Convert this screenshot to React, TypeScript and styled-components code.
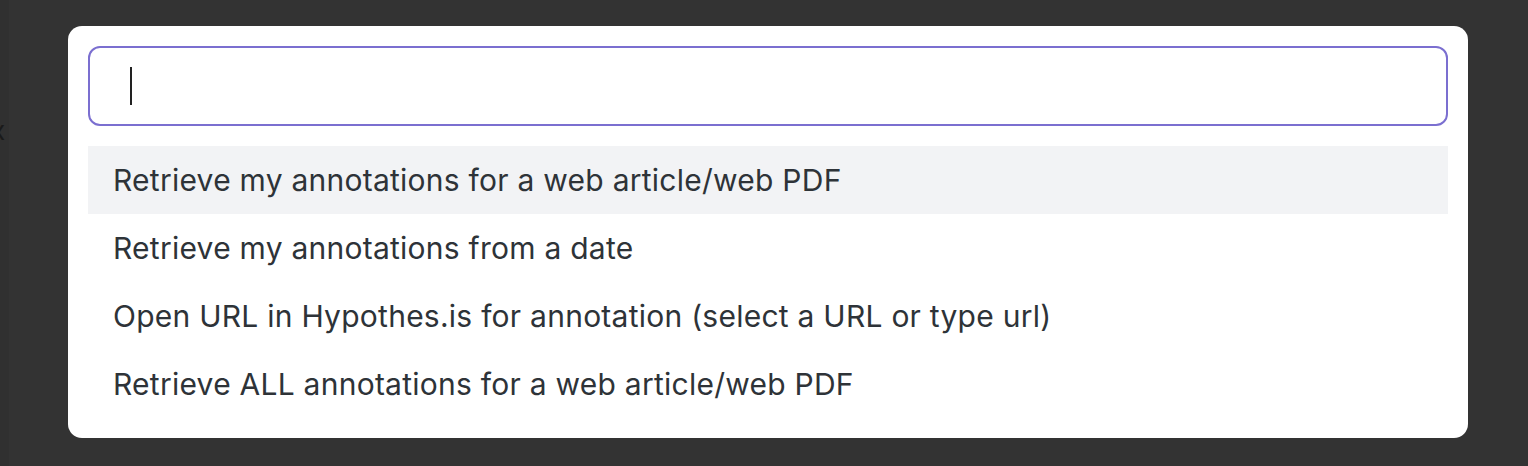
import React from "react";
import styled, { createGlobalStyle } from "styled-components";

const Global = createGlobalStyle`
  html, body { margin: 0; padding: 0; background: #333333; }
  body { font-family: Inter, "Noto Sans", sans-serif; }
`;

const Page = styled.div`
  position: relative;
  width: 1528px;
  height: 466px;
  background: #333333;
  display: flex;
  overflow: hidden;
`;

const Strip = styled.div`
  width: 9px;
  flex: none;
  background: #303030;
  position: relative;
  overflow: hidden;
`;

const Glyph = styled.span`
  position: absolute;
  left: -9px;
  top: 116px;
  font-size: 26px;
  line-height: 30px;
  color: #1a1a1a;
  font-family: Inter, sans-serif;
`;

const Stage = styled.div`
  flex: 1;
  padding: 26px 0 0 59px;
`;

const Modal = styled.div`
  width: 1400px;
  height: 412px;
  box-sizing: border-box;
  background: #ffffff;
  border-radius: 14px;
  padding: 20px;
  display: flex;
  flex-direction: column;
  gap: 20px;
`;

const InputBox = styled.div`
  height: 80px;
  box-sizing: border-box;
  border: 2px solid #7b6fd0;
  border-radius: 12px;
  display: flex;
  align-items: center;
  padding-left: 40px;
`;

const Caret = styled.div`
  width: 2px;
  height: 38px;
  background: #222222;
`;

const List = styled.div`
  display: flex;
  flex-direction: column;
`;

const Row = styled.div<{ $active?: boolean }>`
  height: 68px;
  display: flex;
  align-items: center;
  padding-left: 25px;
  background: ${(p) => (p.$active ? "#f2f3f5" : "transparent")};
  color: #2e3338;
  font-size: 30px;
  letter-spacing: 0.25px;
`;

const items = [
  "Retrieve my annotations for a web article/web PDF",
  "Retrieve my annotations from a date",
  "Open URL in Hypothes.is for annotation (select a URL or type url)",
  "Retrieve ALL annotations for a web article/web PDF",
];

export default function App() {
  return (
    <Page>
      <Global />
      <Strip>
        <Glyph>x</Glyph>
      </Strip>
      <Stage>
        <Modal>
          <InputBox>
            <Caret />
          </InputBox>
          <List>
            {items.map((t, i) => (
              <Row key={i} $active={i === 0}>
                {t}
              </Row>
            ))}
          </List>
        </Modal>
      </Stage>
    </Page>
  );
}
